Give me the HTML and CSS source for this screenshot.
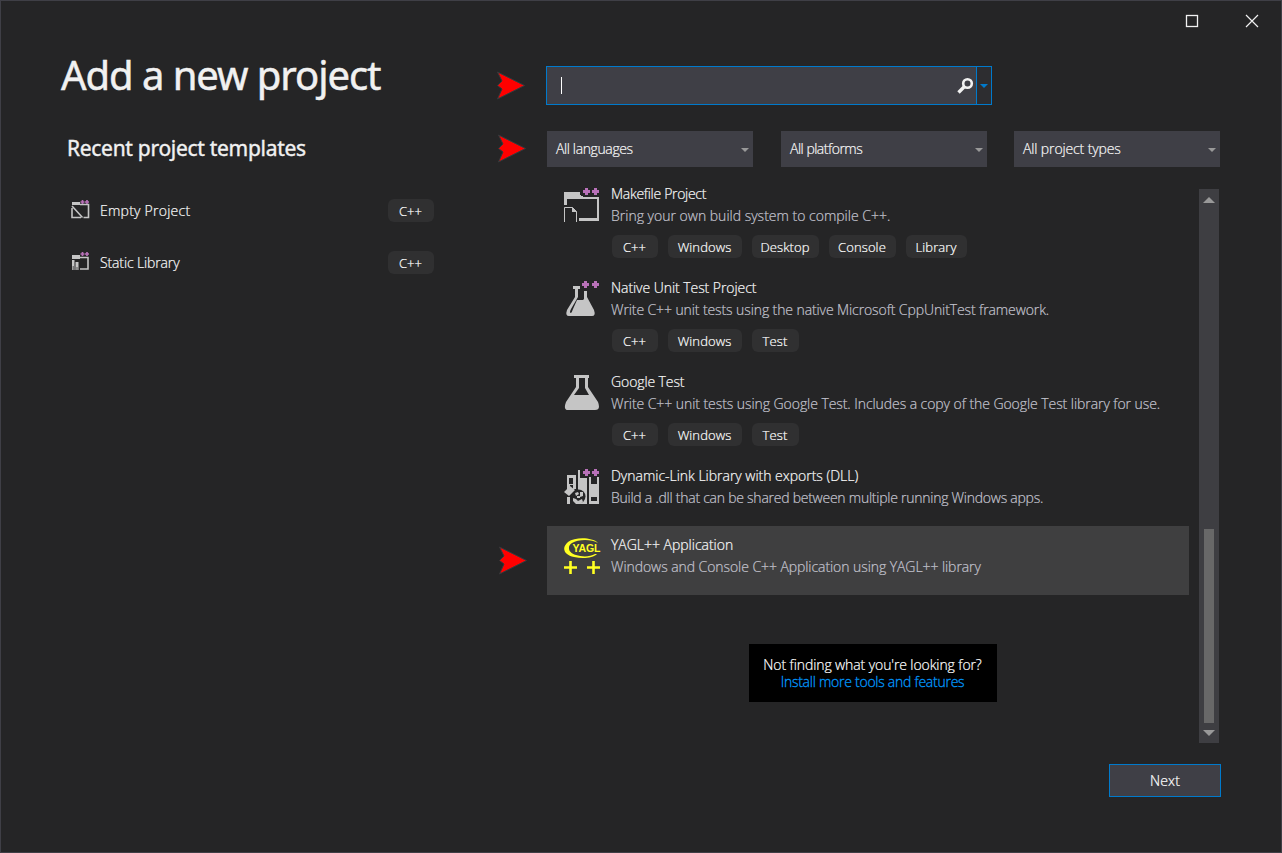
FILE: index.html
```
<!DOCTYPE html>
<html lang="en">
<head>
<meta charset="utf-8">
<title>Add a new project</title>
<link rel="stylesheet" href="styles.css">
</head>
<body>
<svg width="0" height="0" class="defs">
  <defs>
    <path id="arrow" d="M1.500 1L28.500 14.500L1.500 28L6 18L1.500 14.500L6 10Z"/>
    <path id="plus" d="M2 0h3v2h2v3h-2v2h-3v-2h-2v-3h2z"/>
  </defs>
</svg>
<div class="window">
  <header class="titlebar">
    <svg class="max" width="14" height="14"><rect x="1.500" y="1.500" width="11" height="11" fill="none" stroke="#f1f1f1" stroke-width="1.300"/></svg>
    <svg class="close" width="14" height="14"><path d="M1 1L13 13M13 1L1 13" stroke="#f1f1f1" stroke-width="1.200"/></svg>
  </header>
  <main class="content">
    <section class="recent">
      <h1>Add a new project</h1>
      <h2>Recent project templates</h2>
      <div class="recent-item">
        <svg width="20" height="20" viewBox="0 0 20 20"><path d="M2 2h8v3H2z" fill="#c5c5c5"/><path d="M10 4.500H18.500V17.500H13.500M2 8V17.500H11M2 6L12.500 17.500" fill="none" stroke="#c5c5c5" stroke-width="1.600"/><path d="M10.500 2h4m-2-2v4m2.500-2h4m-2-2v4" stroke="#b871b8" stroke-width="1.700"/></svg>
        <span class="recent-name">Empty Project</span><span class="tag">C++</span>
      </div>
      <div class="recent-item">
        <svg width="20" height="20" viewBox="0 0 20 20"><path d="M2 3h8v4H2zM2 8h2.500v10H2zM5.500 10h3v8h-3z" fill="#c5c5c5"/><path d="M8 5.500H18V17H10" fill="none" stroke="#c5c5c5" stroke-width="1.600"/><path d="M3.200 14v4M7 15v3" stroke="#252526" stroke-width=".7"/><path d="M10.500 2h4m-2-2v4m2.500-2h4m-2-2v4" stroke="#b871b8" stroke-width="1.700"/></svg>
        <span class="recent-name static">Static Library</span><span class="tag">C++</span>
      </div>
    </section>
    <section class="browse">
      <div class="search-row">
        <svg class="arrow" width="29" height="29"><use href="#arrow"/></svg>
        <div class="search">
          <span class="caret"></span>
          <svg class="glass" width="18" height="18"><circle cx="11.500" cy="6.500" r="4.300" fill="none" stroke="#f1f1f1" stroke-width="2.600"/><path d="M8 10L2.500 15.500" stroke="#f1f1f1" stroke-width="3.400"/></svg>
          <span class="search-menu"><svg width="8" height="4"><path d="M0 0H8L4 4Z" fill="#007acc"/></svg></span>
        </div>
      </div>
      <div class="filter-row">
        <svg class="arrow" width="29" height="29"><use href="#arrow"/></svg>
        <div class="select"><span class="f1">All languages</span><svg width="8" height="4"><path d="M0 0H8L4 4Z" fill="#999"/></svg></div>
        <div class="select"><span class="f2">All platforms</span><svg width="8" height="4"><path d="M0 0H8L4 4Z" fill="#999"/></svg></div>
        <div class="select last"><span class="f3">All project types</span><svg width="8" height="4"><path d="M0 0H8L4 4Z" fill="#999"/></svg></div>
      </div>
      <div class="results">
        <div class="list">
          <article class="item">
            <svg class="icon" width="38" height="40"><path d="M0 5H16V8H19V10H35V34H15V31H33V12H3V18H0Z" fill="#c5c5c5"/><path d="M.5 35V20.500H8.500L12.500 24.500V35" fill="none" stroke="#c5c5c5"/><path d="M8 20l5 5h-5z" fill="#c5c5c5"/><path d="M17 0h20v9H17z" fill="#252526"/><use href="#plus" x="19" y="1" fill="#b871b8"/><use href="#plus" x="28" y="1" fill="#b871b8"/></svg>
            <div class="text"><h3 class="t1">Makefile Project</h3><p class="d1">Bring your own build system to compile C++.</p>
            <div class="tags"><span class="tag">C++</span><span class="tag win">Windows</span><span class="tag desk">Desktop</span><span class="tag cons">Console</span><span class="tag lib">Library</span></div></div>
          </article>
          <article class="item">
            <svg class="icon" width="38" height="40"><path d="M9 5H16V8H14V16L7 28Q5 32 7 32Q8 31 9 28L13 19H19L20 18V10H23V16L30 29Q32 35 28 35H5Q1 35 3 29L11 16V8H9Z" fill="#c5c5c5"/><use href="#plus" x="18" y="0" fill="#b871b8"/><use href="#plus" x="28" y="0" fill="#b871b8"/></svg>
            <div class="text"><h3 class="t2">Native Unit Test Project</h3><p class="d2">Write C++ unit tests using the native Microsoft CppUnitTest framework.</p>
            <div class="tags"><span class="tag">C++</span><span class="tag win">Windows</span><span class="tag test">Test</span></div></div>
          </article>
          <article class="item">
            <svg class="icon" width="38" height="40"><path fill-rule="evenodd" d="M10 0H25V3H24V12L34 27Q37 35 31 35H4Q-1 35 2 27L12 12V3H10ZM15 3V13L10 20H25L21 13V3Z" fill="#c5c5c5"/></svg>
            <div class="text"><h3 class="t3">Google Test</h3><p class="d3">Write C++ unit tests using Google Test. Includes a copy of the Google Test library for use.</p>
            <div class="tags"><span class="tag">C++</span><span class="tag win">Windows</span><span class="tag test">Test</span></div></div>
          </article>
          <article class="item short">
            <svg class="icon" width="38" height="40"><path fill-rule="evenodd" d="M3 6H12V20H9V16H6V20H3ZM5 9V15H9V9ZM14 1H16V9H23V35H14ZM25 8H35V35H25ZM27 8V15H33V8ZM27 28V32H33V28Z" fill="#c5c5c5"/><path d="M3 28h3v7H3z" fill="#c5c5c5"/><circle cx="14.500" cy="27.500" r="7" fill="#252526"/><path d="M0 23L6 17L11 21L5 27ZM11 24l3-1 1 2-3 2zM16 23h3v4l-3 1zM9 29l3 1 2 2 4-2 1 3-3 2h-4l-3-3zM13 27h3v2h-3z" fill="#c5c5c5"/><path d="M17 0h20v8H17z" fill="#252526"/><use href="#plus" x="19" y="0" fill="#b871b8"/><use href="#plus" x="28" y="0" fill="#b871b8"/></svg>
            <div class="text"><h3 class="t4">Dynamic-Link Library with exports (DLL)</h3><p class="d4">Build a .dll that can be shared between multiple running Windows apps.</p></div>
          </article>
          <article class="item short selected">
            <svg class="icon" width="38" height="42"><path fill-rule="evenodd" d="M34 4C28-2 11-2 4 3C-3 9 0 16 10 18C19 20 29 19 33 15L31 15C26 18 18 18 12 16C4 14 3 7 8 4C14 0 28 0 34 4Z" transform="translate(0 1)" fill="#ff2"/><text x="8.500" y="14" class="logo" textLength="28">YAGL</text><path d="M0 29.500H13M6.500 23V36M23 29.500H36M29.500 23V36" stroke="#ff2" stroke-width="2.600"/></svg>
            <div class="text"><h3 class="t5">YAGL++ Application</h3><p class="d5">Windows and Console C++ Application using YAGL++ library</p></div>
            <svg class="arrow marker" width="29" height="29"><use href="#arrow"/></svg>
          </article>
          <div class="more"><span class="m1">Not finding what you're looking for?</span><a class="m2">Install more tools and features</a></div>
        </div>
        <div class="scrollbar">
          <svg width="12" height="6"><path d="M0 6H12L6 0Z" fill="#999"/></svg>
          <div class="thumb"></div>
          <svg width="12" height="6"><path d="M0 0H12L6 6Z" fill="#999"/></svg>
        </div>
      </div>
      <button class="next">Next</button>
    </section>
  </main>
</div>
</body>
</html>
```
FILE: styles.css
```
* { box-sizing: border-box; }
body { margin: 0; background: #252526; color: #f8f8f8; font: 300 14px/22px "Open Sans", "Noto Sans", sans-serif; -webkit-text-stroke: .2px currentColor; }
h1, h2, h3, p { margin: 0; font-weight: inherit; white-space: nowrap; }
.defs { position: absolute; }
.window { width: 1282px; height: 853px; border: 1px solid #3f3f46; background: #252526; overflow: hidden; }
.titlebar { height: 40px; display: flex; justify-content: flex-end; align-items: center; gap: 46px; padding-right: 22px; }
.content { display: grid; grid-template-columns: 495px 1fr; }
.recent { padding-left: 60px; }
h1 { font: 400 40px/54px "Noto Sans", sans-serif; color: #f1f1f1; margin-top: 7px; letter-spacing: -1.05px; -webkit-text-stroke: .5px #f1f1f1; }
h2 { font: 400 21px/28px "Noto Sans", sans-serif; color: #f1f1f1; margin: 32px 0 0 6px; letter-spacing: -.29px; -webkit-text-stroke: .4px #f1f1f1; }
.recent-item { display: flex; align-items: center; width: 364px; height: 24px; margin: 36px 0 0 9px; }
.recent-item + .recent-item { margin-top: 28px; }
.recent-item svg { margin-top: -1px; }
.recent-name { margin-left: 10px; flex: 1; letter-spacing: .24px; padding-top: 1px; }
.static { letter-spacing: -.13px; }
.tag { display: inline-flex; align-items: center; justify-content: center; width: 46px; height: 23px; padding: 1px 1px 0 0; border-radius: 6px; background: #303031; font-size: 13px; color: #fff; letter-spacing: .1px; }
.win { width: 74px; }
.desk, .cons { width: 67px; }
.lib { width: 61px; }
.test { width: 47px; }
.arrow { fill: #f00; stroke: #343b3d; stroke-width: 1; flex: none; }
.search-row { display: flex; align-items: center; height: 39px; margin-top: 25px; }
.search { display: flex; align-items: center; width: 446px; height: 39px; margin-left: 21px; border: 1px solid #007acc; background: #3f3f46; }
.caret { width: 1px; height: 17px; margin-left: 14px; background: #fff; }
.glass { margin-left: auto; margin-right: 2px; }
.search-menu { width: 15px; height: 37px; display: flex; align-items: center; justify-content: center; border-left: 1px solid #007acc; background: #2d2d30; }
.filter-row { display: flex; align-items: center; margin-top: 26px; padding-left: 1px; }
.filter-row .arrow { margin-bottom: 2px; }
.select { display: flex; align-items: center; justify-content: space-between; width: 206px; height: 36px; margin-left: 28px; padding: 0 4px 0 9px; background: #3f3f46; white-space: nowrap; }
.select svg { margin-top: 2px; }
.arrow + .select { margin-left: 21px; }
.select.last { margin-left: 27px; }
.f1 { letter-spacing: -.38px; }
.f2 { letter-spacing: -.5px; }
.f3 { letter-spacing: -.13px; }
.results { display: flex; justify-content: space-between; width: 672px; margin: 8px 0 0 51px; }
.list { width: 642px; height: 568px; }
.item { display: flex; height: 94px; padding: 9px 0 0 17px; position: relative; }
.short { height: 69px; }
.selected { background: #3f3f40; }
.icon { flex: none; margin-top: 3px; }
.text { margin: -1px 0 0 9px; }
h3 { font-size: 14px; line-height: 22px; }
p { color: #c3c3ce; }
.t1 { letter-spacing: -.3px; }
.t2 { letter-spacing: -.06px; }
.t3 { letter-spacing: -.1px; }
.t4 { letter-spacing: -.02px; }
.t5 { letter-spacing: -.02px; }
.d2 { letter-spacing: -.1px; }
.d3 { letter-spacing: -.065px; }
.d4 { letter-spacing: -.25px; }
.d5 { letter-spacing: -.07px; }
.tags { display: flex; gap: 10px; margin: 8px 0 0 1px; }
.logo { font: bold 10.500px "Liberation Sans", Arial, sans-serif; fill: #ff2; -webkit-text-stroke: 0; }
.marker { position: absolute; left: -49px; top: 20px; }
.more { width: 248px; height: 58px; margin: 49px 0 0 202px; padding: 12px 1px 0 0; background: #000; color: #fff; display: flex; flex-direction: column; align-items: center; line-height: 17px; white-space: nowrap; }
.more a { color: #0097fb; -webkit-text-stroke: .3px #0097fb; }
.m1 { letter-spacing: -.1px; }
.m2 { letter-spacing: -.26px; }
.scrollbar { display: flex; flex-direction: column; align-items: center; width: 20px; height: 554px; margin-top: 14px; padding: 8px 0 7px; background: #3e3e42; }
.scrollbar svg { flex: none; }
.thumb { width: 10px; height: 194px; margin: auto 0 7px; background: #686868; }
.next { display: block; width: 112px; height: 33px; margin: 21px 0 0 613px; border: 1px solid #007acc; background: #3f3f46; color: #fff; font: inherit; letter-spacing: .2px; -webkit-text-stroke: .2px #fff; }
```
